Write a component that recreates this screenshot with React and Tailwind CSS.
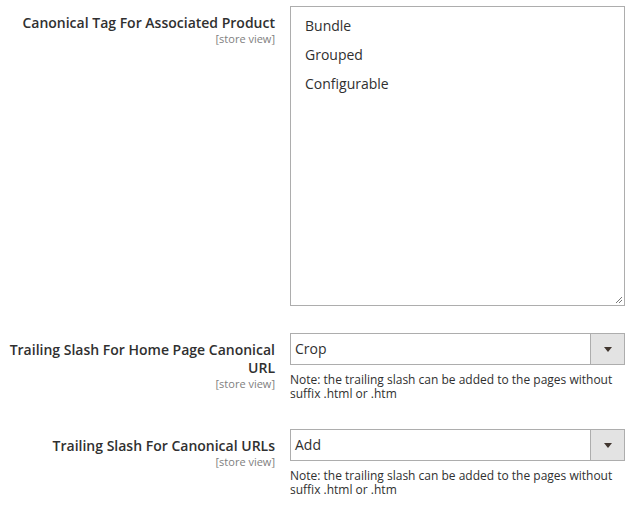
const Label = ({ lines }) => (
  <div className="w-[290px] shrink-0 pl-[2px] pr-[15px] pt-[8px] text-right">
    <div className="text-[14px] font-semibold leading-[18px] text-[#303030]">
      {lines}
    </div>
    <div className="text-[11px] leading-[13px] text-[#808080]">[store view]</div>
  </div>
);

const Select = ({ value }) => (
  <div className="flex h-[32px] w-[335px] border border-[#adadad] bg-white">
    <div className="flex-1 pl-[4px] text-[14px] leading-[30px] text-[#303030]">
      {value}
    </div>
    <div className="flex w-[34px] items-center justify-center border-l border-[#adadad] bg-[#e3e3e3]">
      <svg width="8" height="5" viewBox="0 0 8 5">
        <path d="M0 0h8L4 5z" fill="#41362f" />
      </svg>
    </div>
  </div>
);

const Note = () => (
  <p className="mt-[8px] w-[335px] text-[12px] leading-[14px] text-[#303030]">
    Note: the trailing slash can be added to the pages without suffix .html or .htm
  </p>
);

export default function App() {
  return (
    <div
      className="h-[507px] w-[643px] bg-white pt-[6px]"
      style={{ fontFamily: '"Open Sans", sans-serif' }}
    >
      <div className="flex">
        <Label lines="Canonical Tag For Associated Product" />
        <div className="relative h-[300px] w-[335px] border border-[#adadad] bg-white pt-[4px] text-[14px] text-[#303030]">
          {["Bundle", "Grouped", "Configurable"].map((o) => (
            <div key={o} className="pl-[14px] leading-[29px]">
              {o}
            </div>
          ))}
          <svg
            className="absolute bottom-[1px] right-[1px]"
            width="9"
            height="9"
            viewBox="0 0 9 9"
          >
            <path d="M8 2L2 8M8 5L5 8" stroke="#777" strokeWidth="1" />
          </svg>
        </div>
      </div>

      <div className="mt-[27px] flex">
        <Label lines="Trailing Slash For Home Page Canonical URL" />
        <div>
          <Select value="Crop" />
          <Note />
        </div>
      </div>

      <div className="mt-[28px] flex">
        <Label lines="Trailing Slash For Canonical URLs" />
        <div>
          <Select value="Add" />
          <Note />
        </div>
      </div>
    </div>
  );
}
